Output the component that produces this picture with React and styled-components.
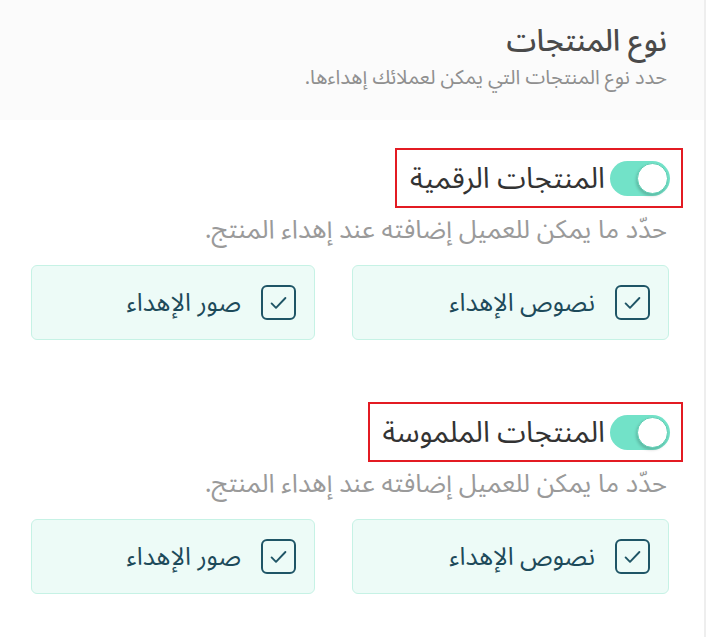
import React from 'react';
import styled, { createGlobalStyle } from 'styled-components';

const GlobalStyle = createGlobalStyle`
  html, body {
    margin: 0;
    padding: 0;
    background: #ffffff;
  }
  body {
    font-family: "Noto Sans Arabic", "DejaVu Sans", "Noto Sans", sans-serif;
  }
`;

const Panel = styled.div`
  direction: rtl;
  width: 706px;
  min-height: 637px;
  box-sizing: border-box;
  border-right: 2px solid #eeeeee;
`;

const Header = styled.header`
  background: #fbfbfb;
  height: 120px;
  box-sizing: border-box;
  padding: 22px 37px 0 0;
`;

const Title = styled.h1`
  margin: 0;
  font-size: 30px;
  font-weight: 500;
  line-height: 40px;
  color: #4a4a4a;
`;

const Subtitle = styled.p`
  margin: 3px 0 0;
  font-size: 20px;
  line-height: 26px;
  color: #8f8f8f;
`;

const Body = styled.div`
  padding: 28px 21px 0 27px;
  display: flex;
  flex-direction: column;
  gap: 62px;
`;

const Section = styled.section`
  display: flex;
  flex-direction: column;
`;

const Highlight = styled.div`
  align-self: flex-start;
  display: flex;
  align-items: center;
  gap: 5px;
  height: 60px;
  box-sizing: border-box;
  padding: 0 11px 0 13px;
  border: 2px solid #e31b23;
`;

const Track = styled.span`
  position: relative;
  width: 60px;
  height: 35px;
  border-radius: 18px;
  background: ${(p) => (p.$on ? '#72e2c8' : '#d9d9d9')};
  flex-shrink: 0;
`;

const Thumb = styled.span`
  position: absolute;
  top: 2px;
  right: ${(p) => (p.$on ? '2px' : 'auto')};
  left: ${(p) => (p.$on ? 'auto' : '2px')};
  width: 31px;
  height: 31px;
  border-radius: 50%;
  background: #ffffff;
  box-sizing: border-box;
  border: 1px solid #5fcfb4;
  box-shadow: -1px 2px 3px rgba(0, 0, 0, 0.18);
`;

const ToggleLabel = styled.span`
  font-size: 29px;
  color: #333333;
  line-height: 1;
`;

const Hint = styled.p`
  margin: 9px 16px 0 0;
  font-size: 25.8px;
  line-height: 26px;
  color: #9a9a9a;
  white-space: nowrap;
`;

const Options = styled.div`
  display: grid;
  grid-template-columns: 317px 284px;
  gap: 37px;
  margin: 22px 14px 0 0;
`;

const OptionCard = styled.label`
  display: flex;
  align-items: center;
  gap: 20px;
  height: 75px;
  box-sizing: border-box;
  padding-right: 18px;
  border: 1px solid #c6f2e5;
  border-radius: 6px;
  background: #edfbf7;
  cursor: pointer;
`;

const Box = styled.span`
  width: 35px;
  height: 35px;
  box-sizing: border-box;
  border: 2px solid #1f5566;
  border-radius: 6px;
  display: flex;
  align-items: center;
  justify-content: center;
  flex-shrink: 0;
`;

const OptionText = styled.span`
  font-size: 25px;
  color: #1d4a5a;
`;

const Check = () => (
  <svg width="17" height="14" viewBox="0 0 17 14" fill="none">
    <path d="M1.6 7.4 L6 11.8 L15.4 2" stroke="#1f5566" strokeWidth="1.9" strokeLinecap="round" strokeLinejoin="round" />
  </svg>
);

const sections = [
  { id: 'digital', title: 'المنتجات الرقمية' },
  { id: 'physical', title: 'المنتجات الملموسة' },
];

const options = ['نصوص الإهداء', 'صور الإهداء'];

const ProductSection = ({ title }) => (
  <Section>
    <Highlight>
      <Track $on>
        <Thumb $on />
      </Track>
      <ToggleLabel>{title}</ToggleLabel>
    </Highlight>
    <Hint>حدّد ما يمكن للعميل إضافته عند إهداء المنتج.</Hint>
    <Options>
      {options.map((o) => (
        <OptionCard key={o}>
          <Box>
            <Check />
          </Box>
          <OptionText>{o}</OptionText>
        </OptionCard>
      ))}
    </Options>
  </Section>
);

const App = () => (
  <>
    <GlobalStyle />
    <Panel>
      <Header>
        <Title>نوع المنتجات</Title>
        <Subtitle>حدد نوع المنتجات التي يمكن لعملائك إهداءها.</Subtitle>
      </Header>
      <Body>
        {sections.map((s) => (
          <ProductSection key={s.id} title={s.title} />
        ))}
      </Body>
    </Panel>
  </>
);

export default App;
